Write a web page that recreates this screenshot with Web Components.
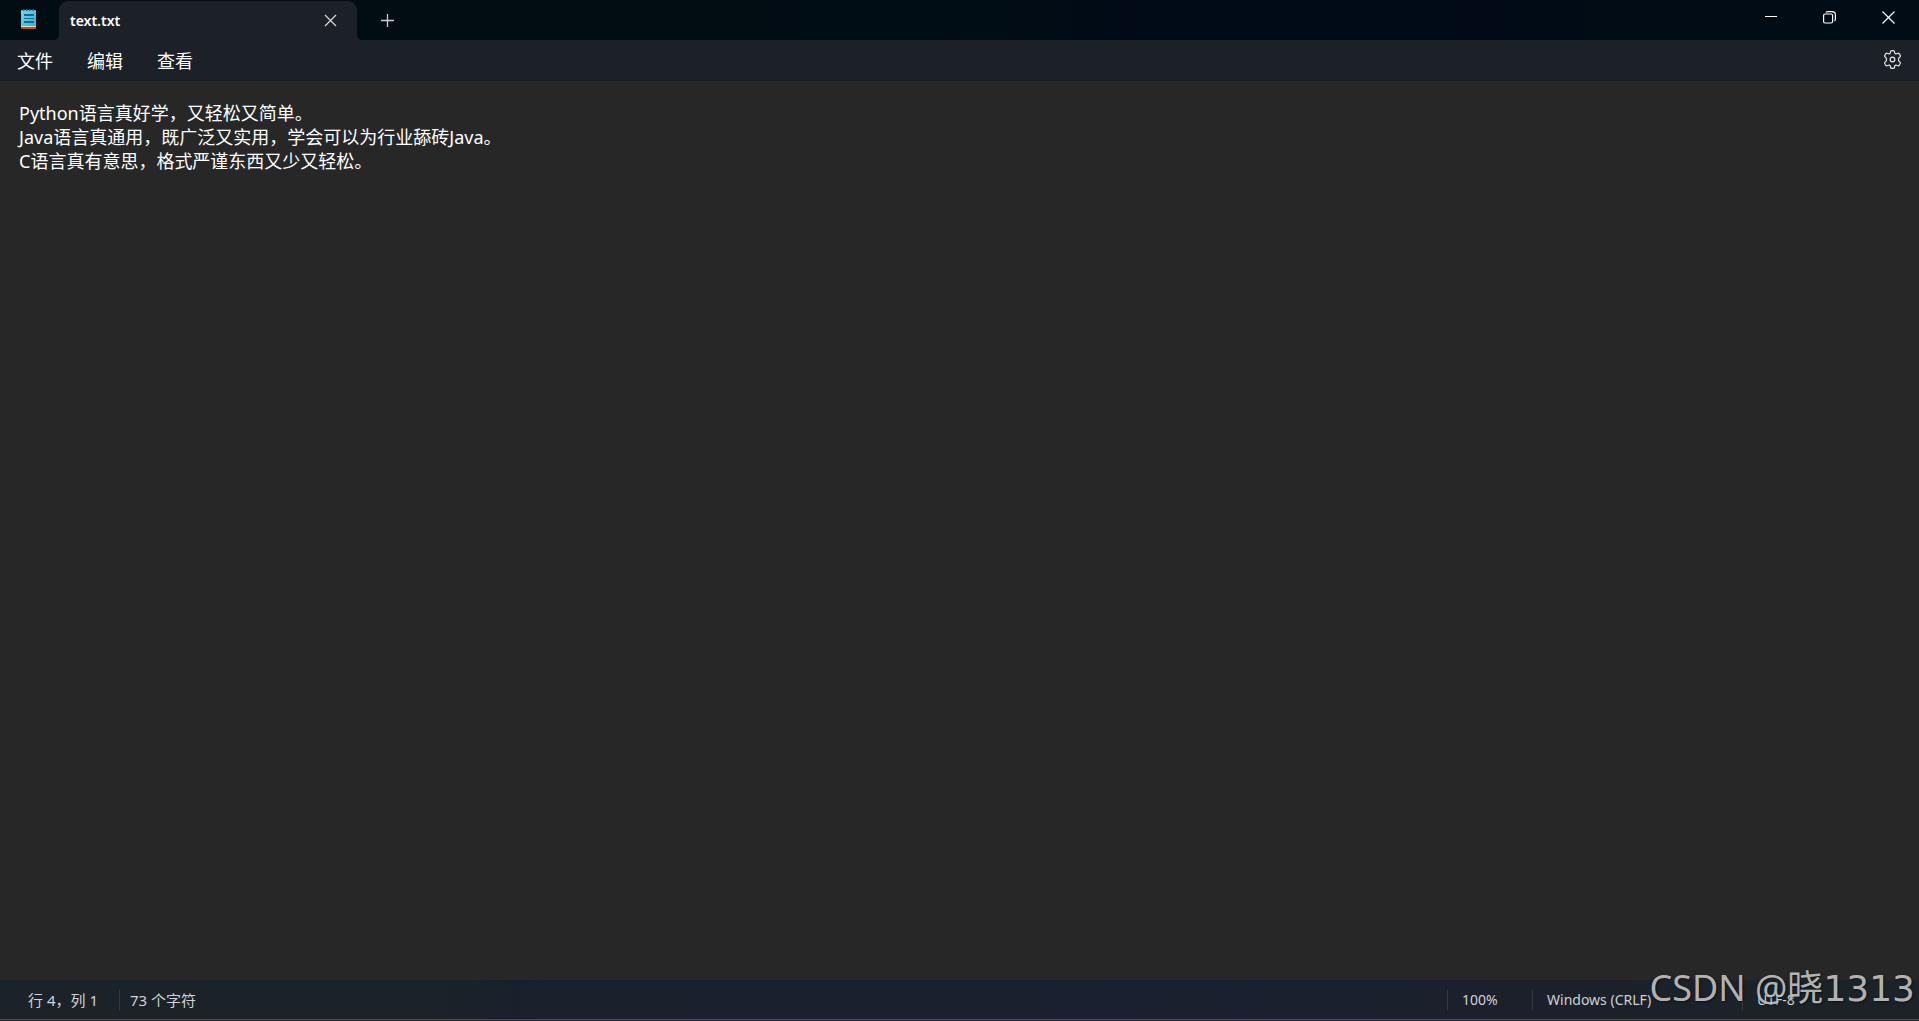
<!DOCTYPE html>
<html lang="zh-CN">
<head>
<meta charset="utf-8">
<title>text.txt</title>
<style>
html,body{height:100%;margin:0}
body{background:#272727;overflow:hidden}
</style>
</head>
<body>
<notepad-window></notepad-window>
<script>
const define = (name, html, setup) => customElements.define(name, class extends HTMLElement {
  constructor() {
    super();
    this.attachShadow({ mode: 'open' }).innerHTML = `<style>
      *{box-sizing:border-box}
      button{font:inherit;color:inherit;background:none;border:0;padding:0;margin:0;display:flex;align-items:center;justify-content:center}
      svg{display:block;fill:none;stroke:currentColor}
    </style>` + html;
    if (setup) setup(this.shadowRoot, this);
  }
});

define('app-icon', `<style>:host{display:block;width:17px;height:21px}svg{stroke:none}</style>
<svg width="17" height="21" viewBox="0 0 17 21">
  <defs><linearGradient id="g" x1="0" y1="0" x2="1" y2="1"><stop offset="0" stop-color="#71d6f0"/><stop offset="1" stop-color="#3fafd2"/></linearGradient></defs>
  <path d="M1 18h15v1q0 1-1 1H2q-1 0-1-1z" fill="#b4540f"/>
  <path d="M1 17h15v1H1z" fill="#f2d8c0"/>
  <path d="M1 2q0-1 1-1h13q1 0 1 1v15H1z" fill="url(#g)"/>
  <path d="M3 0h1.500v2H3zM6 0h1.500v2H6zM9 0h1.500v2H9zM12.500 0H14v2h-1.500z" fill="#10688a"/>
  <path d="M4 5h10v2H4zM4 9h10v1H4zM4 12h10v2H4z" fill="#0b6d92"/>
</svg>`);

define('file-tab', `<style>
:host{display:flex;align-items:center;justify-content:space-between;width:298px;height:39px;padding:0 16px 0 11px;background:#1b2127;border-radius:9px 9px 0 0;position:relative;font-weight:600;font-size:14px;color:#fff}
:host::before,:host::after{content:"";position:absolute;bottom:0;width:5px;height:5px}
:host::before{left:-5px;background:radial-gradient(circle at 0 0,transparent 5px,#1b2127 5px)}
:host::after{right:-5px;background:radial-gradient(circle at 100% 0,transparent 5px,#1b2127 5px)}
button{width:21px;height:23px;color:#d8dadb}
</style><slot></slot>
<button aria-label="关闭标签"><svg width="13" height="13" viewBox="0 0 13 13" stroke-width="1.200"><path d="M1 1l11 11M12 1L1 12"/></svg></button>`);

define('title-bar', `<style>
:host{display:flex;align-items:flex-end;height:40px;background:linear-gradient(90deg,#010c13 0,#010d14 52%,#010a17 60%,#010a17 75%,#010c14 85%)}
app-icon{margin:0 22px 10px 20px}
.add{width:41px;height:39px;margin-left:10px;color:#c9ccce}
.controls{display:flex;margin-left:auto;align-self:flex-start}
.controls button{width:58px;height:35px;color:#fff}
.controls button:last-child{width:61px}
</style>
<app-icon></app-icon><file-tab>text.txt</file-tab>
<button class="add" aria-label="新建标签"><svg width="13" height="13" viewBox="0 0 13 13" stroke-width="1.300"><path d="M6.500 0v13M0 6.500h13"/></svg></button>
<div class="controls">
<button aria-label="最小化"><svg width="14" height="13" viewBox="0 0 14 13"><path d="M1 5.500h12"/></svg></button>
<button aria-label="还原"><svg width="14" height="13" viewBox="-1 0 14 13" stroke-width="1.200"><rect x=".6" y="3" width="9" height="9" rx="1.500"/><path d="M3 1.500Q3.500.6 5 .6h4q3.400 0 3.400 3.400v4q0 1.500-1 2"/></svg></button>
<button aria-label="关闭"><svg width="13" height="13" viewBox="0 0 13 13" stroke-width="1.200"><path d="M.5.5l12 12M12.500.5l-12 12"/></svg></button>
</div>`);

define('menu-bar', `<style>
:host{display:flex;align-items:center;height:41px;padding:0 17px;gap:34px;background:#1b2127;color:#fff;font-size:18px;line-height:24px;border-bottom:1px solid #182025}
button{padding-top:2px}
.gear{margin-left:auto;padding:0;color:#e8e9ea}
</style>
<button>文件</button><button>编辑</button><button>查看</button>
<button class="gear" aria-label="设置"><svg width="19" height="20" viewBox="0 0 19 20" stroke-width="1.200" stroke-linejoin="round"><circle cx="9.500" cy="9.500" r="2.300"/><path d="M8.200.8Q9.500.5 10.800.8Q11.400 1 11.500 1.700L11.700 2.900Q12.300 4.100 13.600 3.700L14.900 3.200Q15.500 3 16 3.500Q16.900 4.600 17.400 5.900Q17.500 6.500 17 6.900L16 7.800Q15 9.500 16 11.200L17 12.100Q17.500 12.500 17.400 13.100Q16.900 14.400 16 15.500Q15.500 16 14.900 15.800L13.600 15.300Q12.300 14.900 11.700 16.100L11.500 17.300Q11.400 18 10.800 18.200Q9.500 18.500 8.200 18.200Q7.600 18 7.500 17.300L7.300 16.100Q6.700 14.900 5.400 15.300L4.100 15.800Q3.500 16 3 15.500Q2.100 14.400 1.600 13.100Q1.500 12.500 2 12.100L3 11.200Q4 9.500 3 7.800L2 6.900Q1.500 6.500 1.600 5.900Q2.100 4.600 3 3.500Q3.500 3 4.100 3.200L5.400 3.700Q6.700 4.100 7.300 2.900L7.500 1.700Q7.600 1 8.200.8z"/></svg></button>`);

define('text-editor', `<style>
:host{display:flex;flex:1;min-height:0;background:#272727}
textarea{flex:1;border:0;outline:0;resize:none;background:none;color:#fff;font:inherit;font-size:18px;line-height:24px;padding:20px 19px}
</style><textarea aria-label="文本编辑器" spellcheck="false"></textarea>`, (root, el) => {
  root.querySelector('textarea').textContent = [
    'Python语言真好学，又轻松又简单。',
    'Java语言真通用，既广泛又实用，学会可以为行业舔砖Java。',
    'C语言真有意思，格式严谨东西又少又轻松。', ''].join('\n');
});

define('status-bar', `<style>
:host{display:flex;align-items:center;height:41px;padding:0 0 1px 28px;border-bottom:1px solid #262a2e;box-shadow:inset 0 -1px #484d52;background:linear-gradient(90deg,#1b2328 0,#1b2228 22%,#1a202c 28%,#1b2030 65%,#1b202b 80%,#1b2228 90%);color:#d0d2d3;font-size:15px;line-height:20px}
span{display:flex;align-items:center;height:20px;white-space:nowrap}
.sep{border-left:1px solid #343a40;}
.pos{width:91px}.count{padding-left:10px;flex:1}
.zoom,.eol,.enc{font-size:14px;padding-left:14px}
.zoom{width:85px}.eol{width:210px}.enc{width:177px}
</style><span class="pos">行 4，列 1</span><span class="sep count">73 个字符</span><span class="sep zoom">100%</span><span class="sep eol">Windows (CRLF)</span><span class="sep enc">UTF-8</span>`);

define('author-mark', `<style>
:host{display:block;position:absolute;right:4px;bottom:8px;font:36px/48px "Noto Sans","Noto Sans CJK SC",sans-serif;color:rgba(200,200,200,.9);text-shadow:1px 1px 2px rgba(0,0,0,.5);white-space:nowrap;pointer-events:none}
.num{font-family:"DejaVu Sans",sans-serif}
</style>CSDN @晓<span class="num">1313</span>`);

define('notepad-window', `<style>
:host{display:flex;flex-direction:column;height:100vh;position:relative;font-family:"Noto Sans","Noto Sans CJK SC",sans-serif}
</style><title-bar></title-bar><menu-bar></menu-bar><text-editor></text-editor><status-bar></status-bar><author-mark></author-mark>`);
</script>
</body>
</html>
